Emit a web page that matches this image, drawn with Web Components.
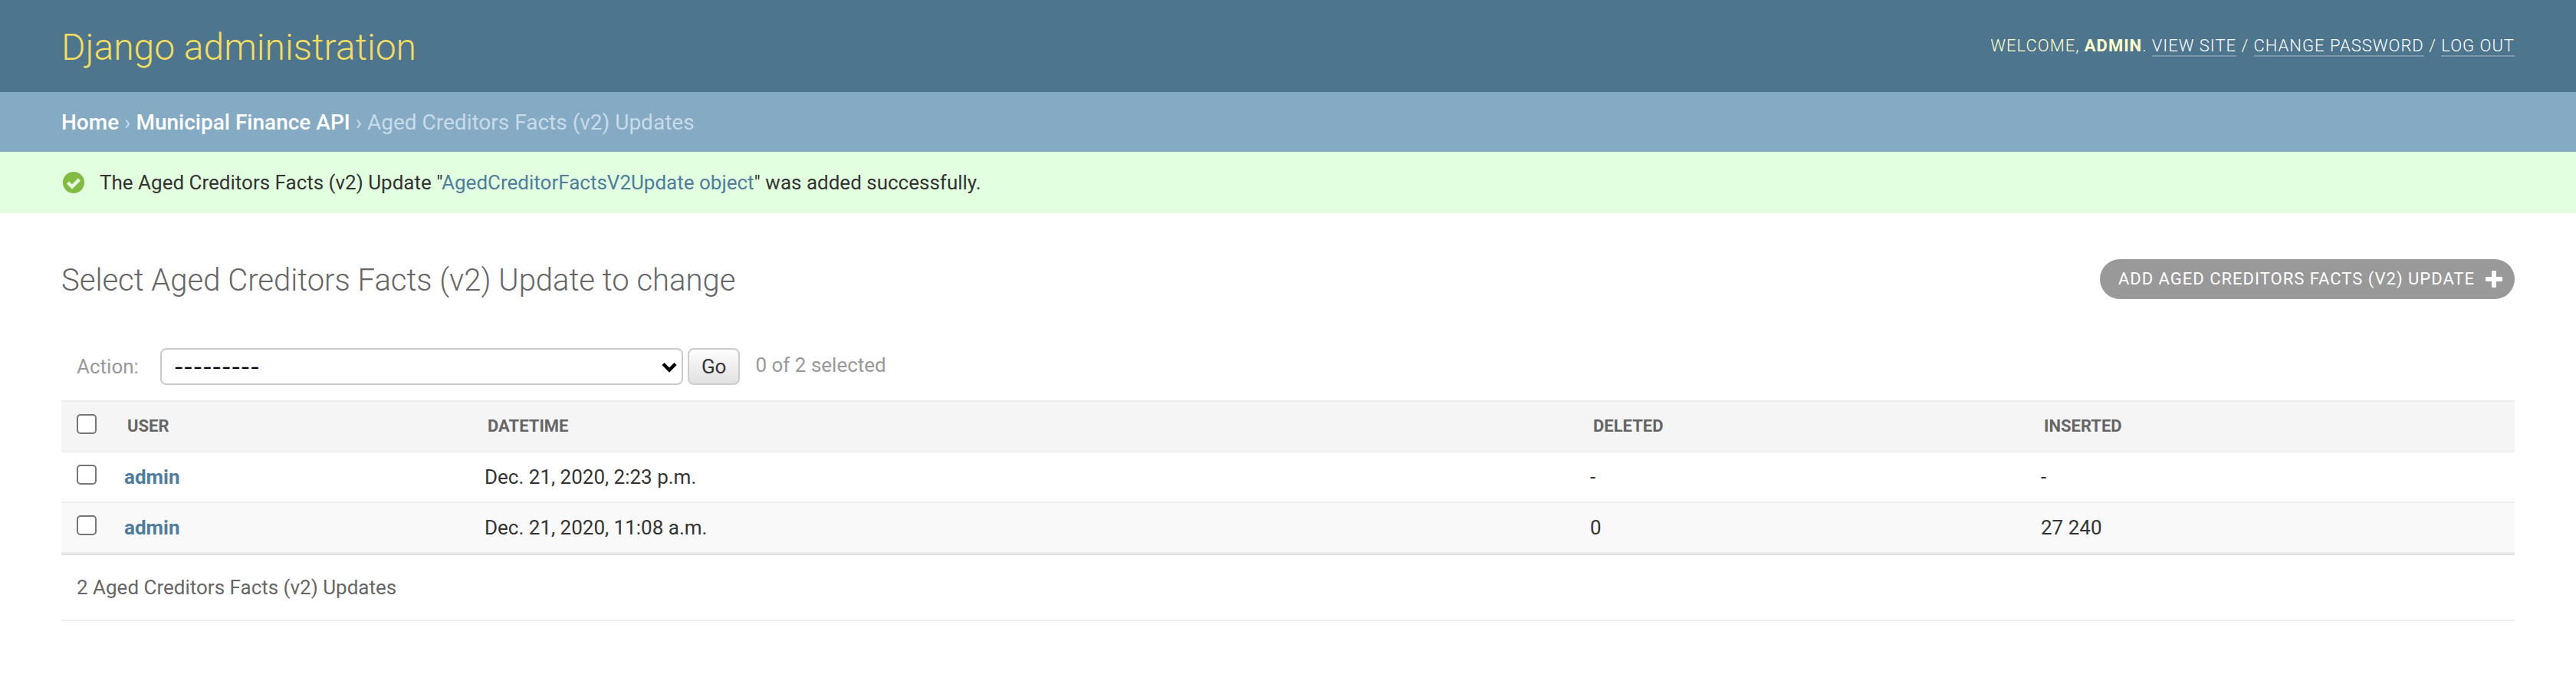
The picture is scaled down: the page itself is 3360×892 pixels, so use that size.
<!DOCTYPE html>
<html lang="en">
<head>
<meta charset="utf-8">
<meta name="viewport" content="width=device-width, initial-scale=1">
<title>Select Aged Creditors Facts (v2) Update to change | Django site admin</title>
<style>
  body { margin: 0; background: #fff; color: #333; font: 26px/32px Roboto, "Liberation Sans", sans-serif; }
</style>
</head>
<body>
<admin-page></admin-page>

<script>
const define = (name, html, setup) => {
  const template = document.createElement('template');
  template.innerHTML = html;
  customElements.define(name, class extends HTMLElement {
    constructor() {
      super();
      this.attachShadow({ mode: 'open' }).append(template.content.cloneNode(true));
    }
    connectedCallback() { if (setup) setup(this, this.shadowRoot); }
  });
};

define('admin-header', `
<style>
  :host { display: flex; align-items: center; justify-content: space-between; padding: 32px 80px 28px; background: #4e758e; color: #ffc; }
  h1 { margin: 0; font-size: 48px; line-height: 60px; font-weight: 300; }
  h1 a { color: #f5dd5d; text-decoration: none; }
  nav { padding-bottom: 4px; font-size: 22px; line-height: 28px; font-weight: 300; letter-spacing: 1px; text-transform: uppercase; }
  strong { font-weight: 700; }
  nav a { color: #fff; text-decoration: none; border-bottom: 2px solid rgba(255,255,255,.25); }
</style>
<h1><a href="#">Django administration</a></h1>
<nav aria-label="User tools">Welcome, <strong><slot></slot></strong>. <a href="#">View site</a> / <a href="#">Change password</a> / <a href="#">Log out</a></nav>
`);

define('admin-breadcrumbs', `
<style>
  :host { display: block; padding: 24px 80px 22px; background: #84aac4; color: #c9dbe8; font-size: 28px; line-height: 32px; }
  ::slotted(a) { color: #fff; text-decoration: none; font-weight: 500; }
</style>
<nav aria-label="Breadcrumbs"><slot></slot></nav>
`);

define('admin-message', `
<style>
  :host { display: flex; align-items: center; gap: 20px; padding: 24px 80px; background: #e2ffdf; }
  svg { display: block; flex: none; width: 30px; height: 28px; }
  ::slotted(a) { color: #4f7d9c; text-decoration: none; }
</style>
<svg viewBox="0 0 30 28" aria-hidden="true"><circle cx="16" cy="14" r="14" fill="#82bb42"/><path d="M8.500 14l5.500 5.500L23.500 10" fill="none" stroke="#e8fbe0" stroke-width="4.500"/></svg>
<div role="status"><slot></slot></div>
`);

define('add-button', `
<style>
  :host { display: block; }
  a { display: flex; align-items: center; gap: 14px; padding: 12px 16px 12px 24px; border-radius: 26px; background: #999; color: #fff; text-decoration: none; text-transform: uppercase; font-size: 22px; line-height: 28px; letter-spacing: 1px; }
  svg { display: block; width: 22px; height: 22px; }
</style>
<a href="#"><span><slot></slot></span>
<svg viewBox="0 0 22 22" aria-hidden="true" fill="#fff"><rect x="8" y="0" width="6" height="22" rx="1"/><rect x="0" y="8" width="22" height="6" rx="1"/></svg></a>
`);

define('action-bar', `
<style>
  :host { display: flex; align-items: center; padding: 20px; color: #999; line-height: 32px; }
  .pick { position: relative; display: flex; margin: 0 6px 0 28px; }
  select { appearance: none; box-sizing: border-box; width: 682px; height: 48px; margin: 0; padding: 0 40px 0 16px; border: 2px solid #ccc; border-radius: 8px; background: #fff; color: #000; font: 27px Inter, sans-serif; }
  svg { position: absolute; right: 8px; top: 18px; width: 20px; height: 14px; pointer-events: none; }
  button { box-sizing: border-box; height: 48px; margin: 0; padding: 0 16px; border: 2px solid #ccc; border-radius: 8px; background: linear-gradient(#fdfdfd, #e1e1e1); color: #333; font: 26px Roboto, sans-serif; }
  output { margin-left: 20px; padding-bottom: 4px; }
</style>
<label for="action">Action:</label>
<span class="pick"><select id="action"><option>---------</option><option>Delete selected Aged Creditors Facts (v2) Updates</option></select>
<svg viewBox="0 0 20 14" aria-hidden="true"><path d="M2 2.500l8 8 8-8" fill="none" stroke="#000" stroke-width="4.500"/></svg></span>
<button type="button">Go</button>
<output></output>
`, (host, root) => {
  root.querySelector('output').textContent = host.getAttribute('status');
});

define('result-table', `
<style>
  :host { display: block; }
  table { width: 100%; table-layout: fixed; border-collapse: separate; border-spacing: 0; }
  .check { width: 66px; } .user { width: 14.6875%; } .date { width: 45.0625%; } .deleted { width: 18.375%; }
  th, td { padding: 16px; text-align: left; vertical-align: top; line-height: 32px; border-bottom: 2px solid #eee; font-weight: 400; }
  thead th { padding: 16px 20px; border-top: 2px solid #eee; background: #f5f5f5; color: #666; font-size: 22px; font-weight: 700; text-transform: uppercase; }
  tbody tr:nth-child(even) > * { background: #f9f9f9; }
  tbody th { font-weight: 700; }
  a { color: #4f7d9c; text-decoration: none; }
  input { appearance: none; display: block; box-sizing: border-box; width: 26px; height: 26px; margin: 0 4px; border: 2px solid #767676; border-radius: 5px; background: #fff; }
  thead .tick, .tick { padding: 16px; }
</style>
<table>
  <colgroup><col class="check"><col class="user"><col class="date"><col class="deleted"><col></colgroup>
  <thead><tr><th class="tick"><input type="checkbox" aria-label="Select all"></th><th scope="col">User</th><th scope="col">Datetime</th><th scope="col">Deleted</th><th scope="col">Inserted</th></tr></thead>
  <tbody></tbody>
</table>
`, (host, root) => {
  const rows = [
    ['admin', 'Dec. 21, 2020, 2:23 p.m.', '-', '-'],
    ['admin', 'Dec. 21, 2020, 11:08 a.m.', '0', '27 240'],
  ];
  root.querySelector('tbody').innerHTML = rows.map(([user, date, deleted, inserted]) =>
    `<tr><td class="tick"><input type="checkbox" aria-label="Select ${user}, ${date}"></td><th scope="row"><a href="#">${user}</a></th><td>${date}</td><td>${deleted}</td><td>${inserted}</td></tr>`).join('');
});

define('result-footer', `
<style>
  :host { display: block; padding: 26px 20px; border-top: 2px solid #ddd; border-bottom: 2px solid #eee; color: #666; }
</style>
<slot></slot>
`);

define('admin-page', `
<style>
  :host { display: block; }
  main { padding: 60px 80px 40px; }
  .title { display: flex; align-items: center; justify-content: space-between; margin-bottom: 44px; }
  h2 { margin: 0; padding-top: 4px; font-size: 40px; line-height: 48px; font-weight: 300; color: #666; }
</style>
<admin-header>admin</admin-header>
<admin-breadcrumbs><a href="#">Home</a> › <a href="#">Municipal Finance API</a> › Aged Creditors Facts (v2) Updates</admin-breadcrumbs>
<admin-message>The Aged Creditors Facts (v2) Update "<a href="#">AgedCreditorFactsV2Update object</a>" was added successfully.</admin-message>
<main>
  <div class="title"><h2>Select Aged Creditors Facts (v2) Update to change</h2><add-button>Add Aged Creditors Facts (v2) Update</add-button></div>
  <action-bar status="0 of 2 selected"></action-bar>
  <result-table></result-table>
  <result-footer>2 Aged Creditors Facts (v2) Updates</result-footer>
</main>
`);

// The breadcrumb and message links live in admin-page's scope, so their look comes from the ::slotted rules above.
</script>
</body>
</html>
